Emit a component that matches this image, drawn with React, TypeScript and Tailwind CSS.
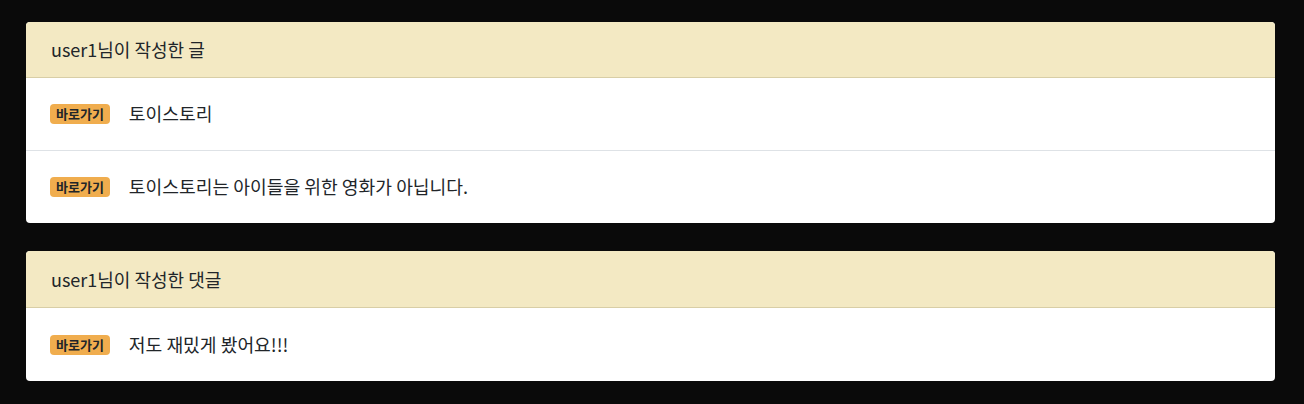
import React from 'react';

type Section = {
  title: string;
  items: string[];
};

const sections: Section[] = [
  { title: 'user1님이 작성한 글', items: ['토이스토리', '토이스토리는 아이들을 위한 영화가 아닙니다.'] },
  { title: 'user1님이 작성한 댓글', items: ['저도 재밌게 봤어요!!!'] },
];

const font = { fontFamily: '"Noto Sans CJK KR", "Noto Sans", sans-serif' };

const App = () => {
  return (
    <div className="min-h-[404px] bg-[#0a0a0a] pl-[26px] pr-[29px] pt-[22px] pb-[24px] flex flex-col gap-[28px]" style={font}>
      {sections.map((section, s) => (
        <div key={section.title} className="bg-white rounded-[4px] overflow-hidden">
          {/* header */}
          <div
            className={`bg-[#f3e9c3] border-b border-[#d8cea6] px-[25px] flex items-center text-[18px] text-[#212529] ${s > 0 ? 'h-[57px]' : 'h-[56px]'}`}
          >
            {section.title}
          </div>
          {section.items.map((item, i) => (
            <div
              key={item}
              className={`px-[24px] flex items-center gap-[19px] ${i > 0 || s > 0 ? 'h-[73px]' : 'h-[72px]'} ${i > 0 ? 'border-t border-[#dee2e6]' : ''}`}
            >
              <span className="bg-[#f0ad4e] text-[#212529] text-[13px] font-bold rounded-[4px] px-[6px] h-[20px] leading-[20px]">
                바로가기
              </span>
              <span className="text-[18.2px] text-[#212529]">{item}</span>
            </div>
          ))}
        </div>
      ))}
    </div>
  );
};

export default App;
